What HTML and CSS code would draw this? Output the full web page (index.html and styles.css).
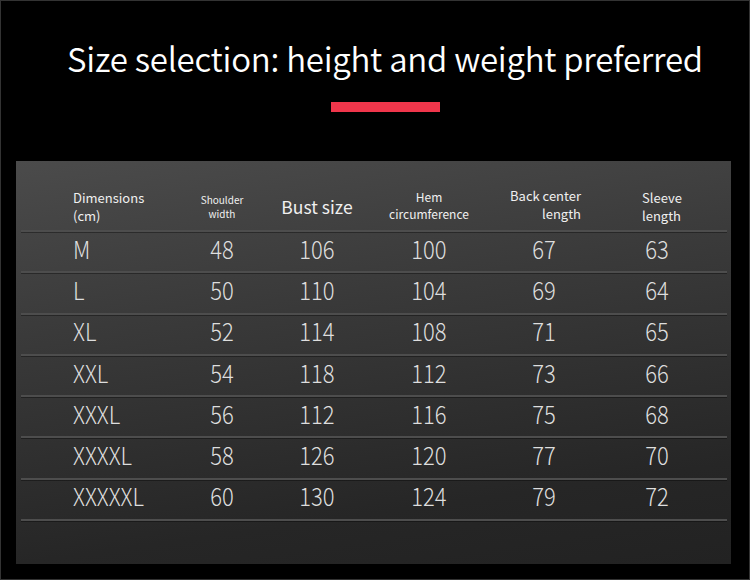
FILE: index.html
```html
<!DOCTYPE html>
<html>
<head>
<meta charset="utf-8">
<link rel="stylesheet" href="styles.css">
</head>
<body>
<div class="page">
  <h1 class="title">Size selection: height and weight preferred</h1>
  <div class="accent"></div>
  <div class="panel">
    <div class="row head">
      <div class="c c1 h-dim">Dimensions<br>(cm)</div>
      <div class="c h-sh">Shoulder<br>width</div>
      <div class="c h-bust">Bust size</div>
      <div class="c h-hem">Hem<br>circumference</div>
      <div class="c h-back">Back center<br>length</div>
      <div class="c h-sleeve">Sleeve<br>length</div>
    </div>
    <div class="row"><div class="c c1">M</div><div class="c">48</div><div class="c">106</div><div class="c">100</div><div class="c">67</div><div class="c">63</div></div>
    <div class="row"><div class="c c1">L</div><div class="c">50</div><div class="c">110</div><div class="c">104</div><div class="c">69</div><div class="c">64</div></div>
    <div class="row"><div class="c c1">XL</div><div class="c">52</div><div class="c">114</div><div class="c">108</div><div class="c">71</div><div class="c">65</div></div>
    <div class="row"><div class="c c1">XXL</div><div class="c">54</div><div class="c">118</div><div class="c">112</div><div class="c">73</div><div class="c">66</div></div>
    <div class="row"><div class="c c1">XXXL</div><div class="c">56</div><div class="c">112</div><div class="c">116</div><div class="c">75</div><div class="c">68</div></div>
    <div class="row"><div class="c c1">XXXXL</div><div class="c">58</div><div class="c">126</div><div class="c">120</div><div class="c">77</div><div class="c">70</div></div>
    <div class="row"><div class="c c1">XXXXXL</div><div class="c">60</div><div class="c">130</div><div class="c">124</div><div class="c">79</div><div class="c">72</div></div>
  </div>
</div>
</body>
</html>
```

FILE: styles.css
```css
html, body {
  margin: 0;
  padding: 0;
  background: #000;
}
.page {
  width: 750px;
  height: 580px;
  box-sizing: border-box;
  border: 1px solid #333;
  background: #000;
  display: flex;
  flex-direction: column;
  align-items: center;
  font-family: "Noto Sans CJK SC", "Noto Sans", sans-serif;
  color: #fff;
  overflow: hidden;
}
.title {
  margin: 33px 0 0 20px;
  font-weight: 350;
  font-size: 33px;
  line-height: 48px;
  letter-spacing: -0.25px;
  color: #fff;
  white-space: nowrap;
}
.accent {
  width: 109px;
  height: 10px;
  background: #f0364b;
  margin: 20px 0 0 20px;
}
.panel {
  align-self: flex-start;
  margin: 49px 0 0 15px;
  width: 715px;
  height: 403px;
  box-sizing: border-box;
  padding: 22px 4px 0 5px;
  background: linear-gradient(172deg, #4b4b4b 0%, #3a3a3a 35%, #262626 80%, #222 100%);
}
.row {
  display: grid;
  grid-template-columns: 165px 72px 118px 106px 124px 102px 19px;
  height: 39.3px;
  align-items: center;
  border-bottom: 2px solid #4d4d4d;
  box-shadow: 0 1px 0 rgba(0,0,0,0.35);
}
.row.head {
  height: 47px;
}
.c {
  text-align: center;
  font-weight: 300;
  font-size: 25px;
  line-height: 30px;
  padding-bottom: 8px;
  color: #dedede;
  transform: scaleX(0.88);
  white-space: nowrap;
}
.c1 {
  text-align: left;
  padding-left: 52px;
  transform-origin: 52px 50%;
}
.head .c {
  transform: none;
  font-weight: 400;
  color: #f0f0f0;
  padding-bottom: 0;
}
.h-dim {
  font-size: 13px;
  line-height: 18px !important;
}
.h-sh {
  font-size: 10px;
  line-height: 14px !important;
}
.h-bust {
  font-size: 17.5px;
}
.h-hem {
  font-size: 12px;
  line-height: 17px !important;
  margin-top: -4px;
}
.h-back {
  font-size: 13px;
  line-height: 18px !important;
  text-align: right;
  padding-right: 25px;
  margin-top: -4px;
}
.h-sleeve {
  font-size: 13px;
  line-height: 18px !important;
  text-align: left;
  padding-left: 36px;
}
```
